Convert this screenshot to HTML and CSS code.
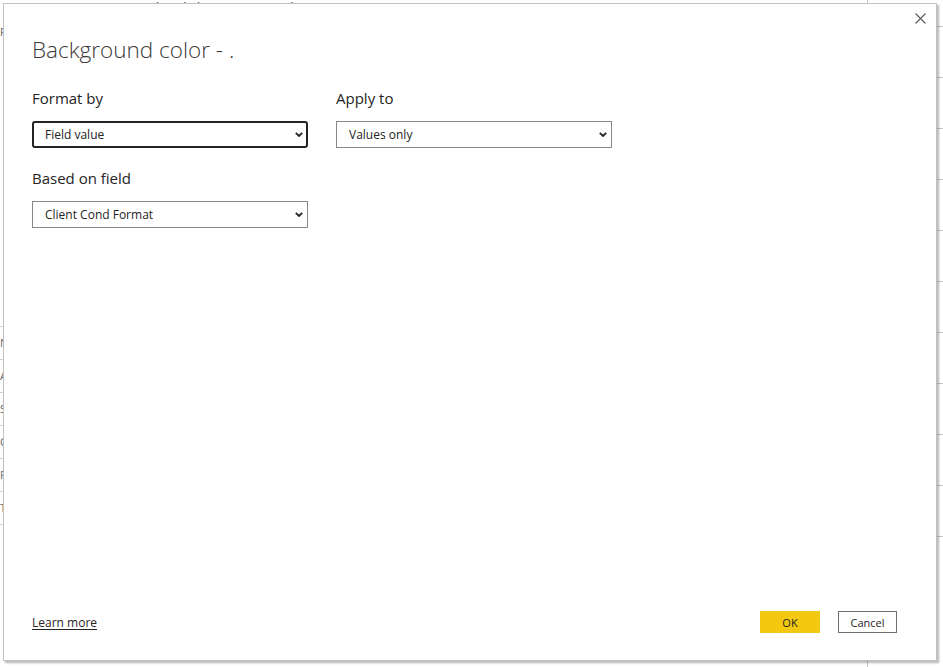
FILE: index.html
```html
<!DOCTYPE html>
<html lang="en">
<head>
<meta charset="utf-8">
<title>Background color</title>
<link rel="stylesheet" href="styles.css">
</head>
<body>
<div class="report">
  <div class="canvas">
    <div class="table-head">
      <span class="col col-a">Font Content</span>
      <span class="col col-b">Predicted Close Date</span>
      <span class="col col-c">Close Date</span>
    </div>
    <div class="table-body">
      <div class="trow tall">Revenue</div>
      <div class="trow">Name</div>
      <div class="trow">Account</div>
      <div class="trow">Stage</div>
      <div class="trow">Owner</div>
      <div class="trow">Region</div>
      <div class="trow">Total</div>
    </div>
  </div>
  <div class="filters">
    <div class="filters-title">Filters</div>
    <div class="fcard">Close Date</div>
    <div class="fcard">Business</div>
    <div class="fcard">Estimate</div>
    <div class="fcard">Account</div>
    <div class="fcard">Client</div>
    <div class="fcard">Owner</div>
    <div class="fcard">Stage</div>
    <div class="fcard">Status</div>
    <div class="fcard">Link</div>
    <div class="fcard">Date</div>
  </div>
</div>

<div class="dialog" role="dialog" aria-label="Background color">
  <button class="close" aria-label="Close">
    <svg width="11" height="11" viewBox="0 0 11 11"><path d="M0.5 0.5 L10.5 10.5 M10.5 0.5 L0.5 10.5" stroke="#5a5a5a" stroke-width="1.1" fill="none"/></svg>
  </button>
  <h1 class="title">Background color - .</h1>
  <div class="fields">
    <div class="field">
      <div class="label">Format by</div>
      <div class="select focused"><span>Field value</span>
        <svg class="chev" width="8" height="5" viewBox="0 0 8 5"><path d="M0.8 0.8 L4 4 L7.2 0.8" stroke="#222" stroke-width="1.8" fill="none"/></svg>
      </div>
    </div>
    <div class="field">
      <div class="label">Apply to</div>
      <div class="select"><span>Values only</span>
        <svg class="chev" width="8" height="5" viewBox="0 0 8 5"><path d="M0.8 0.8 L4 4 L7.2 0.8" stroke="#222" stroke-width="1.8" fill="none"/></svg>
      </div>
    </div>
    <div class="field">
      <div class="label">Based on field</div>
      <div class="select"><span>Client Cond Format</span>
        <svg class="chev" width="8" height="5" viewBox="0 0 8 5"><path d="M0.8 0.8 L4 4 L7.2 0.8" stroke="#222" stroke-width="1.8" fill="none"/></svg>
      </div>
    </div>
  </div>
  <div class="footer">
    <a class="learn" href="#">Learn more</a>
    <div class="buttons">
      <button class="btn ok">OK</button>
      <button class="btn cancel">Cancel</button>
    </div>
  </div>
</div>
</body>
</html>
```

FILE: styles.css
```css
html, body {
  margin: 0;
  padding: 0;
}
body {
  width: 943px;
  height: 667px;
  overflow: hidden;
  position: relative;
  background: #ffffff;
  font-family: "Open Sans", "Noto Sans", "Liberation Sans", sans-serif;
  color: #252423;
}

/* background report */
.report {
  display: flex;
  height: 667px;
}
.canvas {
  width: 867px;
  flex-shrink: 0;
  border-right: 1px solid #c8c8c8;
  display: flex;
  flex-direction: column;
}
.table-head {
  display: flex;
  font-size: 12px;
  line-height: 16px;
  color: #333;
}
.col-a { width: 128px; padding-left: 5px; }
.col-b { width: 150px; }
.table-body {
  display: flex;
  flex-direction: column;
  font-size: 11px;
  color: #666;
}
.trow {
  height: 32px;
  border-bottom: 1px solid #d0d0d0;
  line-height: 32px;
}
.trow.tall { height: 310px; }

.filters {
  flex: 1;
  min-width: 0;
  overflow: hidden;
  display: flex;
  flex-direction: column;
  padding-left: 8px;
  background: #fff;
}
.filters-title {
  font-size: 17px;
  line-height: 22px;
  height: 26px;
  border-bottom: 1px solid #c8c8c8;
  white-space: nowrap;
}
.fcard {
  height: 44px;
  border-bottom: 1px solid #c8c8c8;
  margin-top: 6px;
  font-size: 10px;
  line-height: 30px;
  color: #333;
  white-space: nowrap;
}

/* dialog */
.dialog {
  position: absolute;
  left: 3px;
  top: 3px;
  width: 934px;
  height: 658px;
  box-sizing: border-box;
  border: 1px solid #c2c2c2;
  background: #fff;
  box-shadow: 2px 2px 2px rgba(0, 0, 0, 0.28);
  display: flex;
  flex-direction: column;
  padding: 31px 39px 27px 28px;
}
.close {
  position: absolute;
  right: 9px;
  top: 8px;
  width: 13px;
  height: 13px;
  padding: 1px;
  border: 0;
  background: transparent;
  display: flex;
}
.title {
  margin: 0;
  font-size: 22.5px;
  line-height: 30px;
  font-weight: 300;
  color: #3b3a39;
}
.fields {
  margin-top: 23px;
  display: grid;
  grid-template-columns: 276px 276px;
  column-gap: 28px;
  row-gap: 20px;
  justify-content: start;
}
.label {
  font-size: 15px;
  line-height: 20px;
  color: #252423;
}
.select {
  margin-top: 13px;
  height: 27px;
  box-sizing: border-box;
  border: 1px solid #8a8886;
  display: flex;
  align-items: center;
  justify-content: space-between;
  padding: 0 4px 0 12px;
  font-size: 12px;
  color: #252423;
}
.select.focused {
  border: 2px solid #252423;
  border-radius: 3px;
  padding: 0 3px 0 11px;
}
.footer {
  margin-top: auto;
  display: flex;
  align-items: center;
  justify-content: space-between;
}
.learn {
  font-size: 12px;
  color: #252423;
  text-decoration: underline;
  text-underline-offset: 2px;
}
.buttons {
  display: flex;
  gap: 18px;
}
.btn {
  font-family: inherit;
  font-size: 11px;
  height: 22px;
  box-sizing: border-box;
  color: #252423;
  padding: 0;
}
.ok {
  width: 60px;
  border: 0;
  background: #f2c811;
}
.cancel {
  width: 59px;
  border: 1px solid #6e6e6e;
  background: #fff;
}
```
